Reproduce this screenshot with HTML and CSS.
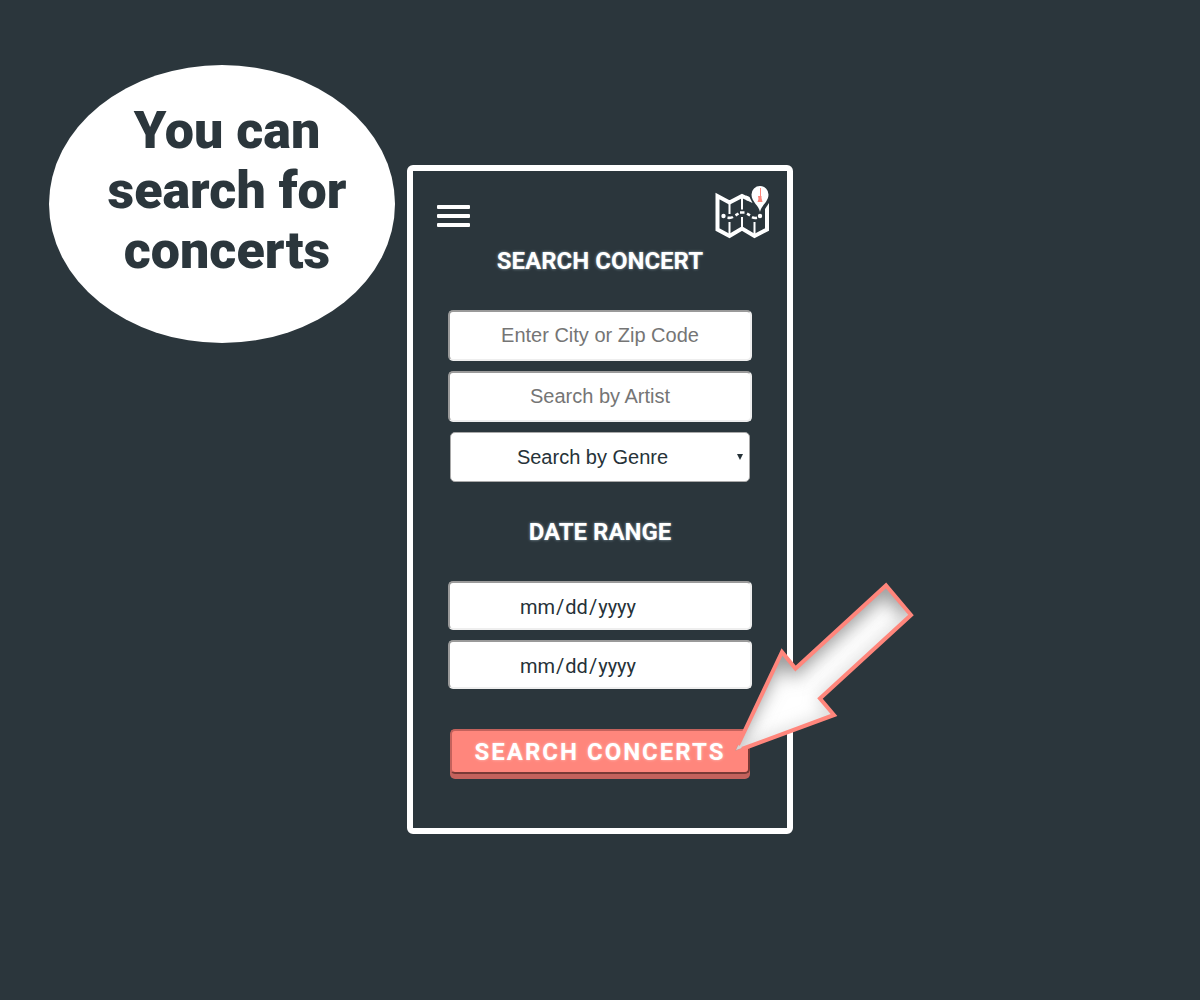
FILE: index.html
```html
<!DOCTYPE html>
<html lang="en">
<head>
  <meta charset="utf-8">
  <meta name="viewport" content="width=device-width, initial-scale=1">
  <title>Search Concert</title>
  <link rel="stylesheet" href="styles.css">
</head>
<body>
  <main class="tour">
    <aside class="bubble">
      <p class="bubble-text">You can search for concerts</p>
    </aside>

    <section class="phone">
      <header class="topbar">
        <button class="menu" type="button" aria-label="Open menu">
          <span class="menu-bar"></span>
          <span class="menu-bar"></span>
          <span class="menu-bar"></span>
        </button>
        <a class="logo" href="#" aria-label="Concert map home">
          <svg width="54" height="54" viewBox="0 0 54 54" fill="none" stroke="#fff">
            <path d="M33.500 14L27 11L14.500 17.500L2.500 11V44.500L14.500 51L27 43.500L39.500 51L52 44.500V24" stroke-width="4"/>
            <path d="M31 10.500L34.500 12L37.500 18L31 15Z" fill="#fff" stroke="none"/>
            <path d="M54 18V26H50V24Z" fill="#fff" stroke="none"/>
            <path d="M14.500 17V29M14.500 37V49M27 11V24.500M27 32V43M39.500 37V49" stroke-width="2"/>
            <path d="M12.500 32.800Q16 33.200 18 32M20.500 30.300L23.500 28.500M25 27.500H29.500M32 28.700L35 30.300M37 32.200Q39 33.300 42 32.800" stroke-width="2.600"/>
            <circle cx="8.500" cy="31" r="2.200" fill="#fff" stroke="none"/>
            <circle cx="45" cy="31" r="2.200" fill="#fff" stroke="none"/>
            <path d="M45 27C44 20.500 36.500 17 36.500 9.500A8.500 8.500 0 0 1 53.500 9.500C53.500 17 46 20.500 45 27Z" fill="#fff" stroke="none"/>
            <path d="M45.500 3V11" stroke="#ff867c" stroke-width="1"/>
            <path d="M43 11H46.500V13L47.500 17H42.500L43.500 14Z" fill="#ff867c" stroke="none"/>
          </svg>
        </a>
      </header>

      <form class="search">
        <h1 class="heading">SEARCH CONCERT</h1>
        <div class="fields">
          <input class="field" type="text" placeholder="Enter City or Zip Code" aria-label="City or zip code">
          <input class="field" type="text" placeholder="Search by Artist" aria-label="Artist">
          <div class="genre">
            <select class="genre-select" aria-label="Genre">
              <option>Search by Genre</option>
            </select>
          </div>
        </div>
        <h2 class="heading">DATE RANGE</h2>
        <div class="fields">
          <input class="field field-date" type="date" aria-label="Start date">
          <input class="field field-date" type="date" aria-label="End date">
        </div>
        <button class="submit" type="button">SEARCH CONCERTS</button>
      </form>

      <svg class="pointer" width="190" height="180" viewBox="730 578 190 180" aria-hidden="true">
        <defs>
          <clipPath id="arrow-clip">
            <path d="M735 751L782 652L795.500 668.500L886 585.500L911 615L820 698.500L834 715Z"/>
          </clipPath>
          <filter id="soft" x="-30%" y="-30%" width="160%" height="160%">
            <feGaussianBlur stdDeviation="9"/>
          </filter>
        </defs>
        <g clip-path="url(#arrow-clip)">
          <path d="M736 750L782 652L795.500 668.500L886 585.500L911 615L820 698.500L834 715Z" fill="#fff"/>
          <path d="M725 748L778 644L794 663L886 580L914 612" fill="none" stroke="#999" stroke-width="22" filter="url(#soft)"/>
          <path d="M914 616L824 699L838 718L733 756" fill="none" stroke="#aaa" stroke-width="6" filter="url(#soft)"/>
        </g>
        <path d="M738 745L782 652L795.500 668.500L886 585.500L911 615L820 698.500L834 715L742 749" fill="none" stroke="#ff867c" stroke-width="4"/>
      </svg>
    </section>
  </main>
</body>
</html>
```
FILE: styles.css
```css
* {
  box-sizing: border-box;
}

body {
  margin: 0;
  background: #2b363c;
  color: #263238;
  font-family: Roboto, sans-serif;
}

.tour {
  display: grid;
  grid-template-columns: 1fr 386px 1fr;
  align-items: start;
  min-height: 100vh;
}

.bubble {
  justify-self: end;
  display: flex;
  justify-content: center;
  width: 346px;
  height: 278px;
  margin: 65px 12px 0 0;
  padding: 36px 40px 0 50px;
  border-radius: 50%;
  background: #fff;
}

.bubble-text {
  margin: 0;
  color: #2b363c;
  font-size: 52px;
  font-weight: 900;
  line-height: 60px;
  text-align: center;
}

.phone {
  position: relative;
  margin-top: 165px;
  padding: 14px 18px 54px 24px;
  border: 6px solid #fff;
  border-radius: 6px;
}

.topbar {
  display: flex;
  align-items: flex-start;
  justify-content: space-between;
}

.menu {
  display: flex;
  flex-direction: column;
  gap: 5px;
  width: 33px;
  margin-top: 20px;
  padding: 0;
  border: 0;
  background: none;
}

.menu-bar {
  height: 4px;
  border-radius: 1px;
  background: #fff;
}

.logo {
  display: block;
  height: 54px;
}

.logo svg {
  display: block;
}

.search {
  display: flex;
  flex-direction: column;
  align-items: center;
  margin: 8px 0 0 -6px;
}

.heading {
  margin: 0;
  color: #fff;
  font-size: 24px;
  font-weight: 700;
  line-height: 28px;
  text-shadow: 0 0 3px #90a4ae;
}

.fields {
  display: flex;
  flex-direction: column;
  align-items: center;
  gap: 10px;
  margin: 35px 0 36px;
}

.field {
  width: 304px;
  height: 51px;
  padding: 0 20px;
  border: 2px solid;
  border-color: #9a9a9a #eee #eee #9a9a9a;
  border-radius: 5px;
  background: #fff;
  color: #263238;
  font-family: "Liberation Sans", Arial, sans-serif;
  font-size: 20px;
  text-align: center;
}

.field::placeholder {
  color: #757575;
}

.field-date {
  height: 49px;
  padding: 2px 46px 0 69px;
  font-family: Roboto, sans-serif;
  text-align: left;
}

.field-date::-webkit-calendar-picker-indicator {
  opacity: 0;
}

.genre {
  position: relative;
  width: 300px;
}

.genre::after {
  content: "";
  position: absolute;
  top: 22px;
  right: 7px;
  width: 6px;
  height: 6px;
  background: #263238;
  clip-path: polygon(0 0, 100% 0, 50% 100%);
  pointer-events: none;
}

.genre-select {
  display: block;
  appearance: none;
  width: 100%;
  height: 50px;
  padding: 0 15px 0 0;
  border: 1px solid #a9a9a9;
  border-radius: 5px;
  background: #fff;
  color: #263238;
  font-family: "Liberation Sans", Arial, sans-serif;
  font-size: 20px;
  text-align: center;
  text-align-last: center;
}

.submit {
  width: 300px;
  height: 45px;
  margin-top: 4px;
  padding: 0;
  border: 2px solid;
  border-color: #c4625c #7a3a36 #7a3a36 #c4625c;
  border-radius: 5px;
  background: #ff867c;
  box-shadow: 0 5px 0 #c4625c;
  color: #fff;
  font-family: inherit;
  font-size: 24px;
  font-weight: 700;
  letter-spacing: 2px;
  text-shadow: 0 0 3px #ffc4be;
}

.pointer {
  position: absolute;
  top: 407px;
  left: 317px;
  pointer-events: none;
}
```
